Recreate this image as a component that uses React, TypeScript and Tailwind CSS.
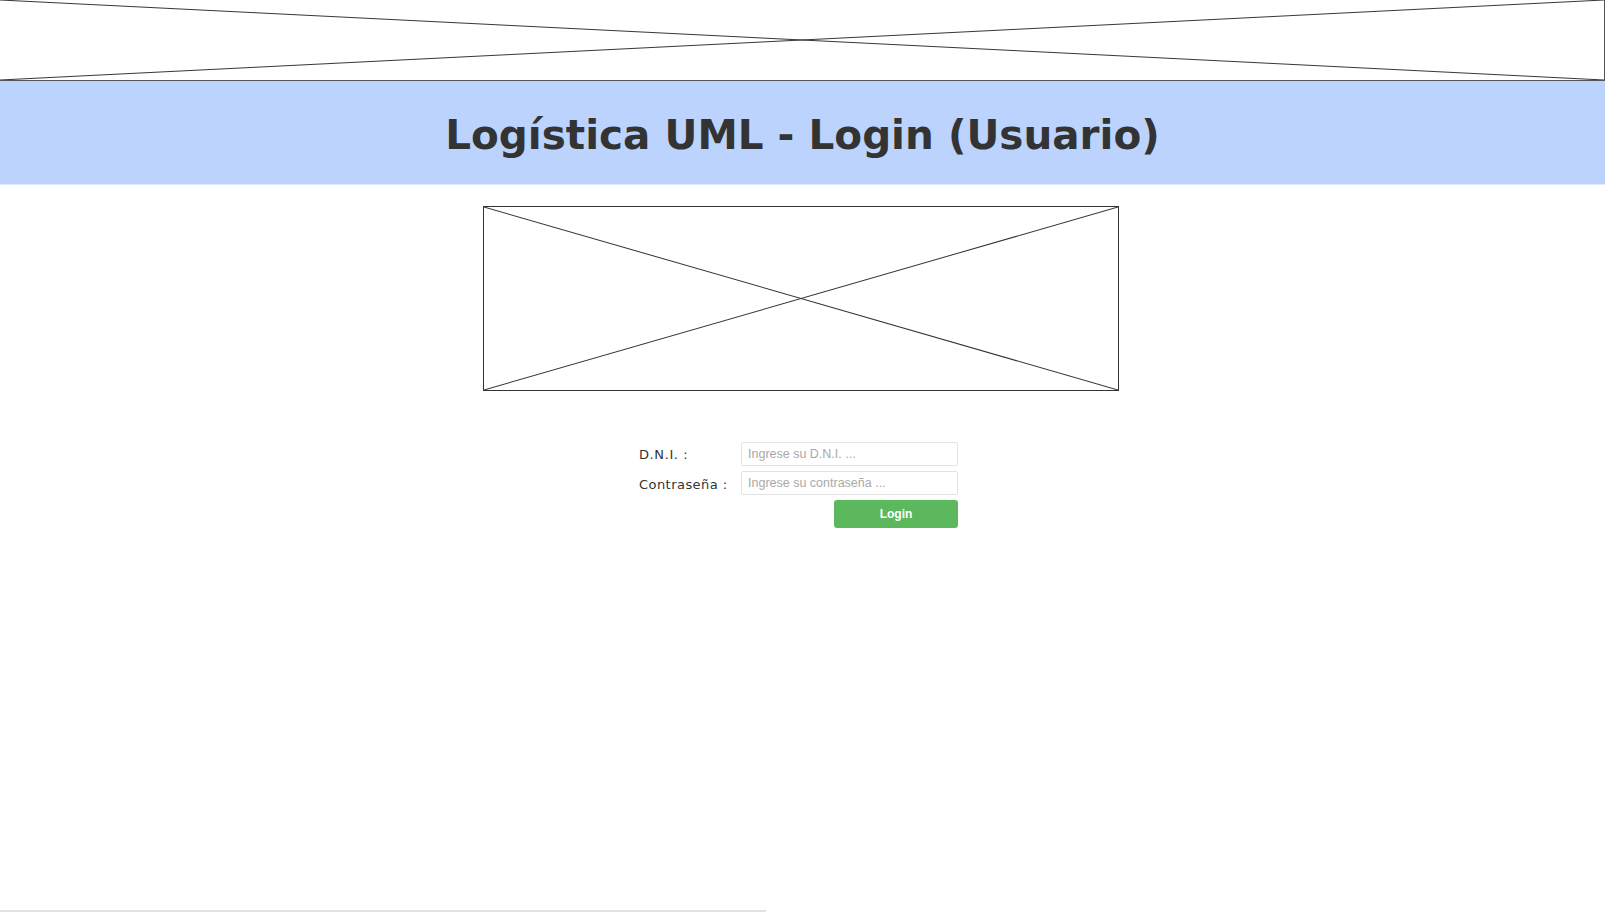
import React from "react";

function XBox({ className, viewBox, w, h }: { className: string; viewBox: string; w: number; h: number }) {
  return (
    <svg className={className} viewBox={viewBox} preserveAspectRatio="none">
      <line x1={0} y1={0} x2={w} y2={h} stroke="#333" strokeWidth={1} vectorEffect="non-scaling-stroke" />
      <line x1={0} y1={h} x2={w} y2={0} stroke="#333" strokeWidth={1} vectorEffect="non-scaling-stroke" />
    </svg>
  );
}

export default function App() {
  return (
    <div className="h-[913px] w-full overflow-hidden bg-white flex flex-col" style={{ fontFamily: '"DejaVu Sans", Verdana, sans-serif' }}>
      {/* Top banner image placeholder (partly scrolled out) */}
      <div className="h-[81px] w-[1605px] shrink-0 border-r border-b border-[#555] overflow-hidden">
        <svg className="block w-[1604px] h-[80px]" viewBox="0 -3 1604 83" preserveAspectRatio="none">
          <line x1={0} y1={-3} x2={1604} y2={80} stroke="#333" strokeWidth={1} />
          <line x1={0} y1={80} x2={1604} y2={-3} stroke="#333" strokeWidth={1} />
        </svg>
      </div>

      {/* Header */}
      <div className="h-[104px] shrink-0 bg-[#bbd3fd] border-b border-[#e3ebf7] flex items-center justify-center">
        <h1 className="text-[40.5px] font-bold text-[#333] leading-none pt-[5px]" style={{ fontFamily: '"DejaVu Sans", Verdana, sans-serif' }}>
          Logística UML - Login (Usuario)
        </h1>
      </div>

      {/* Logo image placeholder */}
      <div className="flex justify-center pt-[21px] pr-[4px]">
        <div className="w-[636px] h-[185px] border border-[#333] bg-white">
          <XBox className="block w-full h-full" viewBox="0 0 100 100" w={100} h={100} />
        </div>
      </div>

      {/* Login form */}
      <div className="flex justify-center pt-[51px] pr-[8px]">
        <div className="grid grid-cols-[102px_217px] gap-y-[5px] w-[319px]">
          <label className="flex items-center pt-[2px] text-[13px] text-[#333] tracking-[0.6px]">D.N.I. :</label>
          <input
            className="h-[24px] w-[217px] border border-[#e2e2e2] rounded-[2px] px-[6px] text-[12.5px] text-[#333] placeholder:text-[#a9a9a9] outline-none"
            style={{ fontFamily: '"Liberation Sans", Arial, sans-serif' }}
            placeholder="Ingrese su D.N.I. ..."
          />
          <label className="flex items-center pt-[4px] text-[13px] text-[#333] tracking-[0.45px]">Contraseña :</label>
          <input
            type="password"
            className="h-[24px] w-[217px] border border-[#e2e2e2] rounded-[2px] px-[6px] text-[12.5px] text-[#333] placeholder:text-[#a9a9a9] outline-none"
            style={{ fontFamily: '"Liberation Sans", Arial, sans-serif' }}
            placeholder="Ingrese su contraseña ..."
          />
          <div />
          <div className="flex justify-end">
            <button
              className="h-[28px] w-[124px] rounded-[3px] bg-[#5cb85c] text-white text-[12px] font-bold"
              style={{ fontFamily: '"Liberation Sans", Arial, sans-serif' }}
            >
              Login
            </button>
          </div>
        </div>
      </div>

      {/* Bottom scrollbar thumb */}
      <div className="mt-auto mb-[1px] h-[2px] w-[766px] bg-[#e2e2e2]" />
    </div>
  );
}
